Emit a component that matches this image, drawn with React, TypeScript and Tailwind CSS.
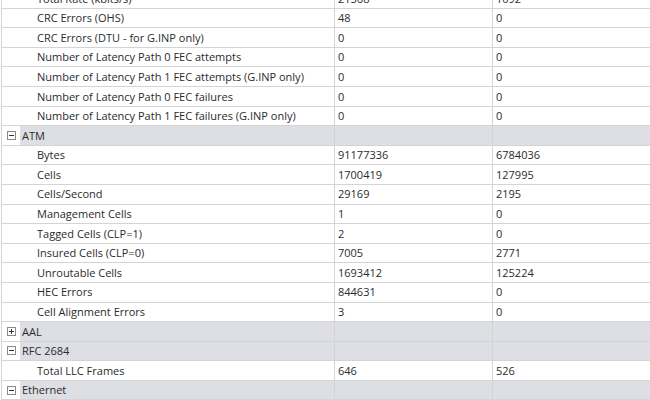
import React from "react";

type Row = { kind: "h"; label: string; open: boolean } | { kind: "r"; label: string; a: string; b: string };

const rows: Row[] = [
  { kind: "r", label: "Total Rate (kbits/s)", a: "21568", b: "1092" },
  { kind: "r", label: "CRC Errors (OHS)", a: "48", b: "0" },
  { kind: "r", label: "CRC Errors (DTU - for G.INP only)", a: "0", b: "0" },
  { kind: "r", label: "Number of Latency Path 0 FEC attempts", a: "0", b: "0" },
  { kind: "r", label: "Number of Latency Path 1 FEC attempts (G.INP only)", a: "0", b: "0" },
  { kind: "r", label: "Number of Latency Path 0 FEC failures", a: "0", b: "0" },
  { kind: "r", label: "Number of Latency Path 1 FEC failures (G.INP only)", a: "0", b: "0" },
  { kind: "h", label: "ATM", open: true },
  { kind: "r", label: "Bytes", a: "91177336", b: "6784036" },
  { kind: "r", label: "Cells", a: "1700419", b: "127995" },
  { kind: "r", label: "Cells/Second", a: "29169", b: "2195" },
  { kind: "r", label: "Management Cells", a: "1", b: "0" },
  { kind: "r", label: "Tagged Cells (CLP=1)", a: "2", b: "0" },
  { kind: "r", label: "Insured Cells (CLP=0)", a: "7005", b: "2771" },
  { kind: "r", label: "Unroutable Cells", a: "1693412", b: "125224" },
  { kind: "r", label: "HEC Errors", a: "844631", b: "0" },
  { kind: "r", label: "Cell Alignment Errors", a: "3", b: "0" },
  { kind: "h", label: "AAL", open: false },
  { kind: "h", label: "RFC 2684", open: true },
  { kind: "r", label: "Total LLC Frames", a: "646", b: "526" },
  { kind: "h", label: "Ethernet", open: true },
];

function Box({ open }: { open: boolean }) {
  return (
    <svg width="9" height="9" viewBox="0 0 9 9" className="shrink-0">
      <rect x="0.5" y="0.5" width="8" height="8" fill="white" stroke="#8a8a8a" />
      <line x1="2" y1="4.5" x2="7" y2="4.5" stroke="#333" />
      {!open && <line x1="4.5" y1="2" x2="4.5" y2="7" stroke="#333" />}
    </svg>
  );
}

export default function App() {
  return (
    <div
      className="w-[650px] h-[400px] overflow-hidden bg-white text-[11px] text-[#2b2b2b]"
      style={{ fontFamily: '"Open Sans", "Noto Sans", sans-serif' }}
    >
      <div className="mt-[-11px] border-l border-[#d4d4d4] ml-[1px]">
        {rows.map((r, i) =>
          r.kind === "h" ? (
            <div key={i} className="flex h-[19.6px] border-b border-[#d4d4d4]">
              <div className="w-[332px] flex items-center">
                <div className="w-[18px] h-full flex items-center justify-center bg-white pl-[1px]">
                  <Box open={r.open} />
                </div>
                <div className="flex-1 h-full bg-[#dddfe4] flex items-center pl-[2px] pt-[1px]">{r.label}</div>
              </div>
              <div className="w-[158px] bg-[#dddfe4] border-l border-[#d4d4d4]" />
              <div className="flex-1 bg-[#dddfe4] border-l border-[#d4d4d4]" />
            </div>
          ) : (
            <div key={i} className="flex h-[19.6px] border-b border-[#d4d4d4] items-center">
              <div className="w-[332px] h-full pl-[35px] pt-[1px] whitespace-nowrap flex items-center">{r.label}</div>
              <div className="w-[158px] h-full border-l border-[#d4d4d4] pl-[3px] pt-[1px] flex items-center">{r.a}</div>
              <div className="flex-1 h-full border-l border-[#d4d4d4] pl-[3px] pt-[1px] flex items-center">{r.b}</div>
            </div>
          )
        )}
      </div>
    </div>
  );
}
